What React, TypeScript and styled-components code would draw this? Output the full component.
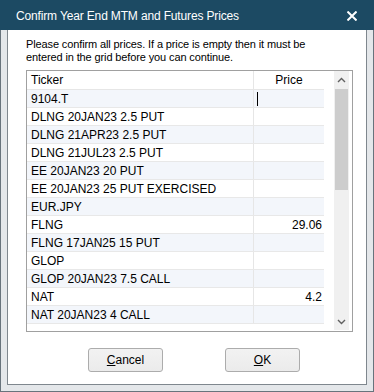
import styled, { createGlobalStyle } from 'styled-components'

type Row = {
  ticker: string
  price?: string
  editing?: boolean
}

const rows: Row[] = [
  { ticker: '9104.T', editing: true },
  { ticker: 'DLNG 20JAN23 2.5 PUT' },
  { ticker: 'DLNG 21APR23 2.5 PUT' },
  { ticker: 'DLNG 21JUL23 2.5 PUT' },
  { ticker: 'EE 20JAN23 20 PUT' },
  { ticker: 'EE 20JAN23 25 PUT EXERCISED' },
  { ticker: 'EUR.JPY' },
  { ticker: 'FLNG', price: '29.06' },
  { ticker: 'FLNG 17JAN25 15 PUT' },
  { ticker: 'GLOP' },
  { ticker: 'GLOP 20JAN23 7.5 CALL' },
  { ticker: 'NAT', price: '4.2' },
  { ticker: 'NAT 20JAN23 4 CALL' },
]

const GlobalStyle = createGlobalStyle`
  html, body {
    margin: 0;
    padding: 0;
    background: #ffffff;
  }
  body {
    font-family: "Liberation Sans", Arial, sans-serif;
    font-size: 12px;
    color: #000;
  }
`

export default function App() {
  return (
    <>
      <GlobalStyle />
      <Window>
        <TitleBar>
          <Title>Confirm Year End MTM and Futures Prices</Title>
          <CloseButton aria-label="Close">
            <svg width="10" height="10" viewBox="0 0 10 10">
              <path
                d="M1.2 1.2 L8.8 8.8 M8.8 1.2 L1.2 8.8"
                stroke="#fff"
                strokeWidth="2"
                strokeLinecap="square"
              />
            </svg>
          </CloseButton>
        </TitleBar>
        <Frame>
          <Panel>
            <Message>
              Please confirm all prices. If a price is empty then it must be
              <br />
              entered in the grid before you can continue.
            </Message>
            <GridBox>
              <Table>
                <HeaderRow>
                  <TickerCell>Ticker</TickerCell>
                  <PriceHeader>Price</PriceHeader>
                </HeaderRow>
                {rows.map((r, i) => (
                  <DataRow key={r.ticker} alt={i % 2 === 0}>
                    <TickerCell>{r.ticker}</TickerCell>
                    <PriceCell>
                      {r.editing ? <Caret /> : r.price}
                    </PriceCell>
                  </DataRow>
                ))}
              </Table>
              <ScrollBar>
                <ScrollArrow>
                  <svg width="9" height="6" viewBox="0 0 9 6">
                    <path d="M1 5 L4.5 1.5 L8 5" stroke="#606060" strokeWidth="1.4" fill="none" />
                  </svg>
                </ScrollArrow>
                <Track>
                  <Thumb />
                </Track>
                <ScrollArrow>
                  <svg width="9" height="6" viewBox="0 0 9 6">
                    <path d="M1 1 L4.5 4.5 L8 1" stroke="#606060" strokeWidth="1.4" fill="none" />
                  </svg>
                </ScrollArrow>
              </ScrollBar>
            </GridBox>
            <ButtonRow>
              <DialogButton>
                <u>C</u>ancel
              </DialogButton>
              <DialogButton>
                <u>O</u>K
              </DialogButton>
            </ButtonRow>
          </Panel>
        </Frame>
      </Window>
    </>
  )
}

const Window = styled.div`
  width: 374px;
  height: 392px;
  box-sizing: border-box;
  display: flex;
  flex-direction: column;
  background: #e4e7ea;
`

const TitleBar = styled.div`
  height: 30px;
  flex: none;
  display: flex;
  align-items: center;
  justify-content: space-between;
  padding: 0 16px 0 16px;
  background: #1c4a63;
  color: #fff;
`

const Title = styled.div`
  font-size: 12px;
  letter-spacing: -0.15px;
  padding-top: 1px;
`

const CloseButton = styled.div`
  display: flex;
  align-items: center;
  padding-top: 2px;
  margin-right: 1px;
`

const Frame = styled.div`
  flex: 1;
  display: flex;
  border: 1px solid #68737c;
  border-top: none;
  padding: 0 6px 6px 6px;
`

const Panel = styled.div`
  flex: 1;
  display: flex;
  flex-direction: column;
  background: #fff;
  border: 1px solid #7f878e;
  border-top: none;
  padding: 8px 13px 0 18px;
`

const Message = styled.div`
  font-size: 11px;
  line-height: 13px;
  letter-spacing: -0.12px;
  height: 32px;
`

const GridBox = styled.div`
  height: 262px;
  box-sizing: border-box;
  border: 1px solid #a0a0a0;
  display: flex;
  gap: 10px;
`

const Table = styled.div`
  width: 297px;
  display: flex;
  flex-direction: column;
`

const HeaderRow = styled.div`
  display: flex;
  height: 19px;
  box-sizing: border-box;
  border-bottom: 1px solid #e6e6e6;
  background: #fff;
`

const DataRow = styled.div<{ alt: boolean }>`
  display: flex;
  height: 18px;
  box-sizing: border-box;
  border-bottom: 1px solid #e8e8e8;
  background: ${({ alt }) => (alt ? '#f3f6fb' : '#ffffff')};
`

const TickerCell = styled.div`
  width: 227px;
  box-sizing: border-box;
  border-right: 1px solid #e6e6e6;
  padding-left: 4px;
  display: flex;
  align-items: center;
  font-size: 12px;
  white-space: nowrap;
  overflow: hidden;
`

const PriceHeader = styled.div`
  flex: 1;
  display: flex;
  align-items: center;
  justify-content: center;
  font-size: 12px;
`

const PriceCell = styled.div`
  flex: 1;
  display: flex;
  align-items: center;
  justify-content: flex-end;
  padding-right: 2px;
  font-size: 12px;
  position: relative;
`

const Caret = styled.span`
  position: absolute;
  left: 3px;
  top: 2px;
  width: 1px;
  height: 14px;
  background: #000;
`

const ScrollBar = styled.div`
  width: 15px;
  display: flex;
  flex-direction: column;
  background: #f0f0f0;
  margin-bottom: 1px;
`

const ScrollArrow = styled.div`
  height: 17px;
  display: flex;
  align-items: center;
  justify-content: center;
`

const Track = styled.div`
  flex: 1;
  display: flex;
  flex-direction: column;
`

const Thumb = styled.div`
  height: 101px;
  margin: 1px 1px 0 1px;
  background: #cdcdcd;
`

const ButtonRow = styled.div`
  display: flex;
  justify-content: flex-start;
  gap: 62px;
  padding: 16px 0 0 62px;
`

const DialogButton = styled.button`
  width: 75px;
  height: 24px;
  box-sizing: border-box;
  border: 1px solid #acacac;
  border-radius: 3px;
  background: linear-gradient(#f2f2f2, #ebebeb);
  font-family: "Liberation Sans", Arial, sans-serif;
  font-size: 12px;
  color: #000;
  padding: 0;
`
